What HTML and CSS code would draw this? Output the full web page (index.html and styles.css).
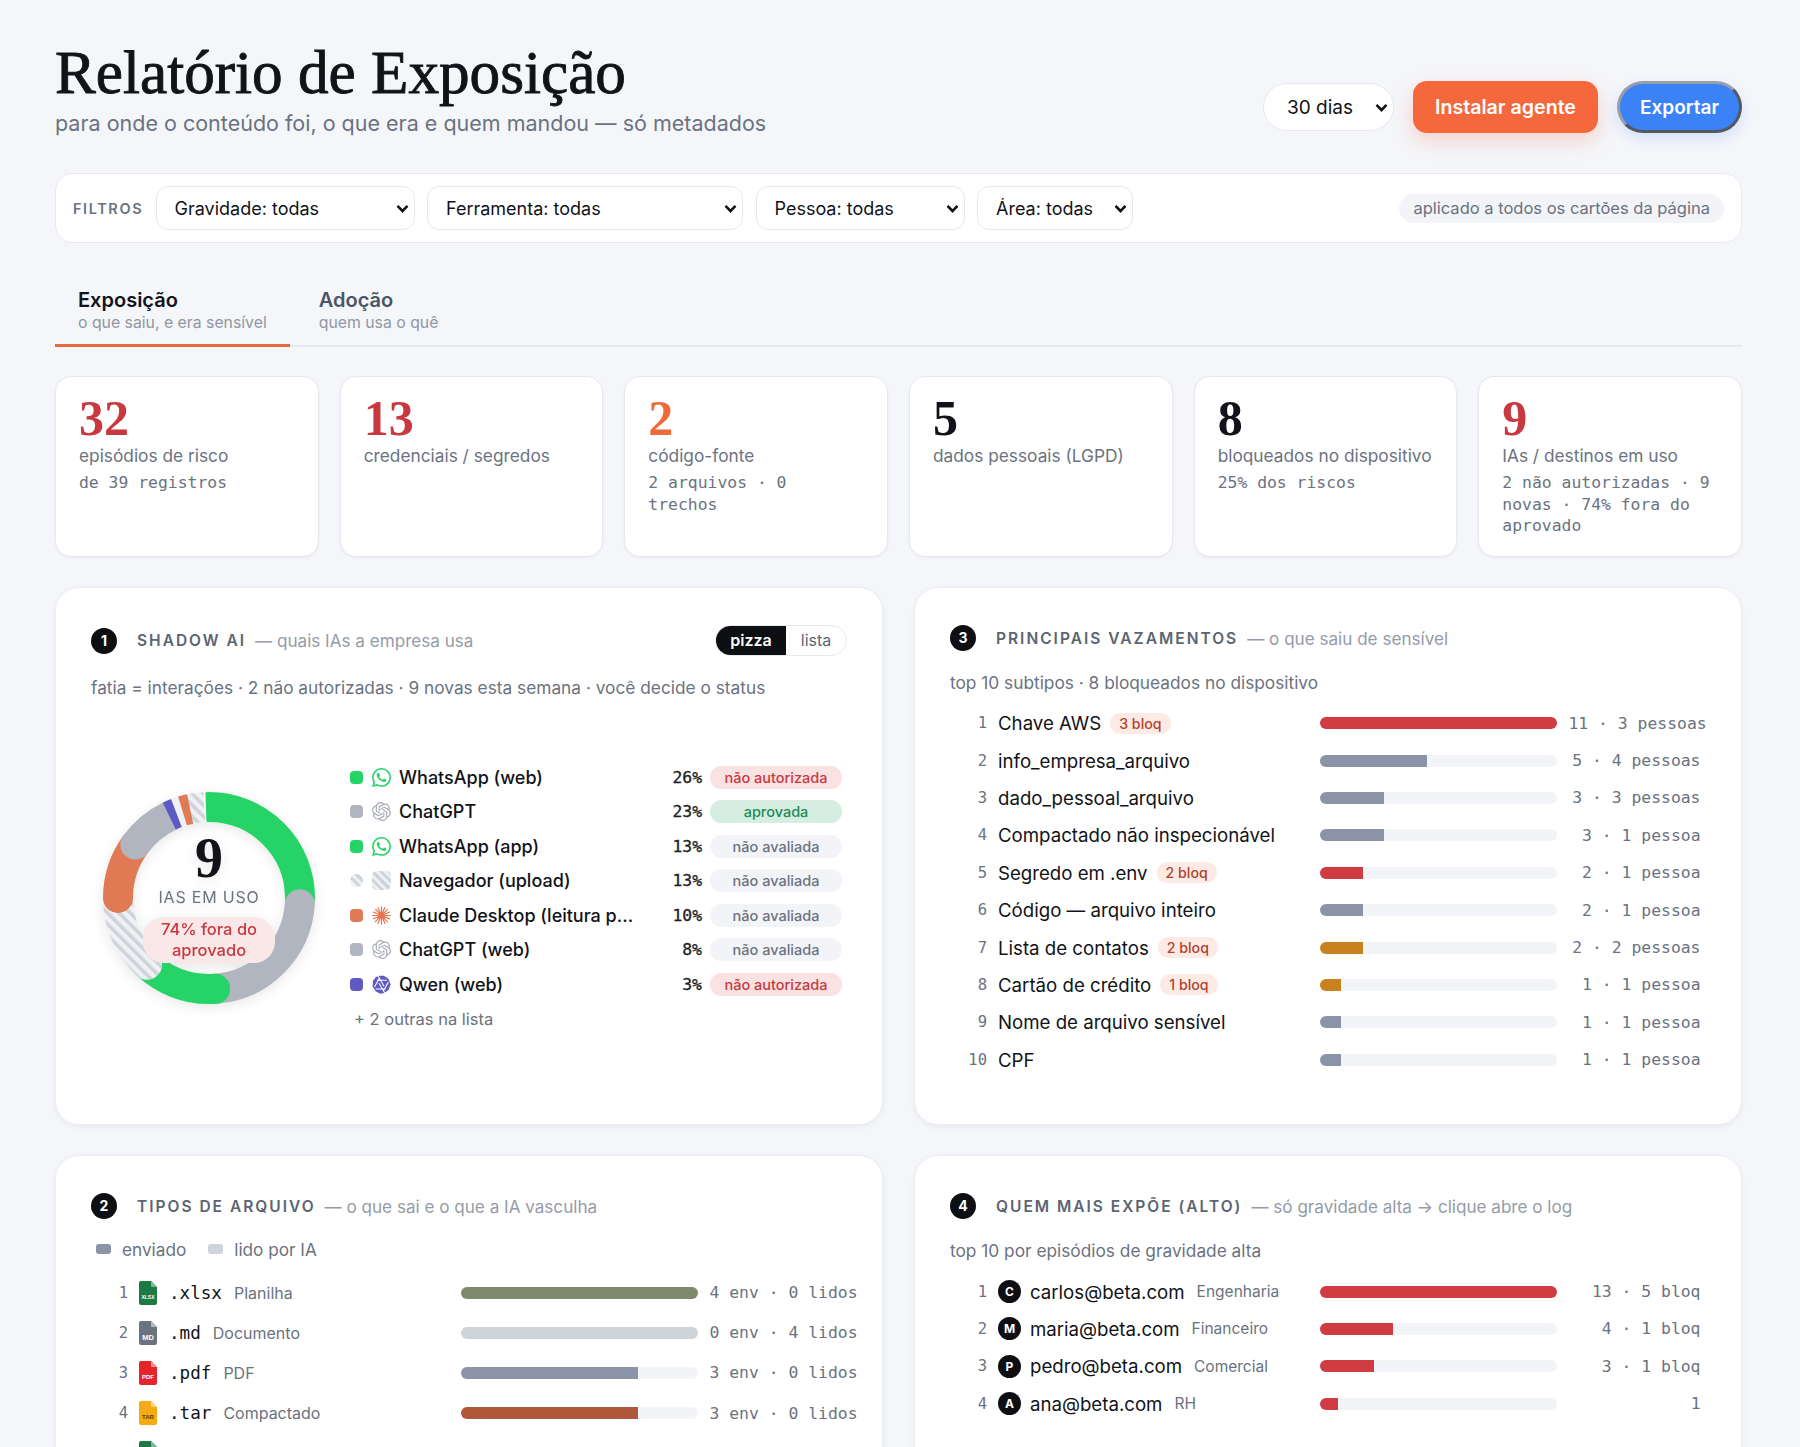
FILE: index.html
```html
<!DOCTYPE html>
<html lang="pt">
  <head>
    <meta charset="utf-8" />
    <title>Relatório de Exposição</title>
    <link rel="stylesheet" href="styles.css">
  </head>
  <body>
    <svg class="defs" width="0" height="0">
      <defs>
        <pattern id="stripes" width="8" height="8" patternUnits="userSpaceOnUse" patternTransform="rotate(45)">
          <rect width="8" height="8" fill="#f0f1f4" />
          <rect width="3.6" height="8" fill="#cfd3da" />
        </pattern>
        <symbol id="i-whatsapp" viewBox="0 0 24 24">
          <path d="M17.472 14.382c-.297-.149-1.758-.867-2.03-.967-.273-.099-.471-.148-.67.15-.197.297-.767.966-.94 1.164-.173.199-.347.223-.644.075-.297-.15-1.255-.463-2.39-1.475-.883-.788-1.48-1.761-1.653-2.059-.173-.297-.018-.458.13-.606.134-.133.298-.347.446-.52.149-.174.198-.298.298-.497.099-.198.05-.371-.025-.52-.075-.149-.669-1.612-.916-2.207-.242-.579-.487-.5-.669-.51-.173-.008-.371-.01-.57-.01-.198 0-.52.074-.792.372-.272.297-1.04 1.016-1.04 2.479 0 1.462 1.065 2.875 1.213 3.074.149.198 2.096 3.2 5.077 4.487.709.306 1.262.489 1.694.625.712.227 1.36.195 1.871.118.571-.085 1.758-.719 2.006-1.413.248-.694.248-1.289.173-1.413-.074-.124-.272-.198-.57-.347m-5.421 7.403h-.004a9.87 9.87 0 01-5.031-1.378l-.361-.214-3.741.982.998-3.648-.235-.374a9.86 9.86 0 01-1.51-5.26c.001-5.45 4.436-9.884 9.888-9.884 2.64 0 5.122 1.03 6.988 2.898a9.825 9.825 0 012.893 6.994c-.003 5.45-4.437 9.884-9.885 9.884m8.413-18.297A11.815 11.815 0 0012.05 0C5.495 0 .16 5.335.157 11.892c0 2.096.547 4.142 1.588 5.945L.057 24l6.305-1.654a11.882 11.882 0 005.683 1.448h.005c6.554 0 11.89-5.335 11.893-11.893a11.821 11.821 0 00-3.48-8.413z" fill="#25d366" />
        </symbol>
        <symbol id="i-openai" viewBox="0 0 24 24">
          <path d="M22.2819 9.8211a5.9847 5.9847 0 0 0-.5157-4.9108 6.0462 6.0462 0 0 0-6.5098-2.9A6.0651 6.0651 0 0 0 4.9807 4.1818a5.9847 5.9847 0 0 0-3.9977 2.9 6.0462 6.0462 0 0 0 .7427 7.0966 5.98 5.98 0 0 0 .511 4.9107 6.051 6.051 0 0 0 6.5146 2.9001A5.9847 5.9847 0 0 0 13.2599 24a6.0557 6.0557 0 0 0 5.7718-4.2058 5.9894 5.9894 0 0 0 3.9977-2.9001 6.0557 6.0557 0 0 0-.7475-7.0729zm-9.022 12.6081a4.4755 4.4755 0 0 1-2.8764-1.0408l.1419-.0804 4.7783-2.7582a.7948.7948 0 0 0 .3927-.6813v-6.7369l2.02 1.1686a.071.071 0 0 1 .038.052v5.5826a4.504 4.504 0 0 1-4.4945 4.4944zm-9.6607-4.1254a4.4708 4.4708 0 0 1-.5346-3.0137l.142.0852 4.783 2.7582a.7712.7712 0 0 0 .7806 0l5.8428-3.3685v2.3324a.0804.0804 0 0 1-.0332.0615L9.74 19.9502a4.4992 4.4992 0 0 1-6.1408-1.6464zM2.3408 7.8956a4.485 4.485 0 0 1 2.3655-1.9728V11.6a.7664.7664 0 0 0 .3879.6765l5.8144 3.3543-2.0201 1.1685a.0757.0757 0 0 1-.071 0l-4.8303-2.7865A4.504 4.504 0 0 1 2.3408 7.872zm16.5963 3.8558L13.1038 8.364 15.1192 7.2a.0757.0757 0 0 1 .071 0l4.8303 2.7913a4.4944 4.4944 0 0 1-.6765 8.1042v-5.6772a.79.79 0 0 0-.407-.667zm2.0107-3.0231l-.142-.0852-4.7735-2.7818a.7759.7759 0 0 0-.7854 0L9.409 9.2297V6.8974a.0662.0662 0 0 1 .0284-.0615l4.8303-2.7866a4.4992 4.4992 0 0 1 6.6802 4.66zM8.3065 12.863l-2.02-1.1638a.0804.0804 0 0 1-.038-.0567V6.0742a4.4992 4.4992 0 0 1 7.3757-3.4537l-.142.0805L8.704 5.459a.7948.7948 0 0 0-.3927.6813zm1.0976-2.3654l2.602-1.4998 2.6069 1.4998v2.9994l-2.5974 1.4997-2.6067-1.4997Z" fill="#a9aeb8" />
        </symbol>
        <symbol id="i-claude" viewBox="0 0 24 24">
          <g stroke="#e8734f" stroke-width="1.5" stroke-linecap="round">
            <path d="M12 12V1M12 12v11M12 12H.8M12 12h11.2M12 12 4.6 4.2M12 12l7.6-7.8M12 12l-7.8 7.8M12 12l7.4 8M12 12 7.6 2.2M12 12l4.2-10M12 12 7.4 22.2M12 12l4.4 10M12 12 1.6 7.6M12 12l10.4-4.4M12 12 1.8 16.2M12 12l10.4 4.2" />
          </g>
          <circle cx="12" cy="12" r="3" fill="#e8734f" />
        </symbol>
        <symbol id="i-qwen" viewBox="0 0 24 24">
          <path d="M9.5.8l5.5.2 5.8 3.6 2.6 7.2-2.2 6.8-5.8 4-5 1-5.8-3.2L.8 14.4 1.2 7.4 5 2.6z" fill="#5f59c4" />
          <path d="M6.2 6.6h12.6M7.8 1.6l7.4 12.6M20.6 9l-6.4 11.4M17 17.6H4.6M16 22.4 8.6 10M3.2 15.2 9.4 3.8" stroke="#fff" stroke-width="1.3" fill="none" />
        </symbol>
      </defs>
    </svg>

    <div class="page">
      <header class="top">
        <div>
          <h1>Relatório de Exposição</h1>
          <p class="lead">para onde o conteúdo foi, o que era e quem mandou — só metadados</p>
        </div>
        <div class="actions">
          <select class="range"><option>30 dias</option></select>
          <button class="btn-install">Instalar agente</button>
          <button class="btn-export">Exportar</button>
        </div>
      </header>

      <div class="filters">
        <span class="filters-label">FILTROS</span>
        <select class="f-grav"><option>Gravidade: todas</option></select>
        <select class="f-tool"><option>Ferramenta: todas</option></select>
        <select class="f-person"><option>Pessoa: todas</option></select>
        <select class="f-area"><option>Área: todas</option></select>
        <span class="filters-note">aplicado a todos os cartões da página</span>
      </div>

      <nav class="tabs">
        <div class="tab active"><strong>Exposição</strong><span>o que saiu, e era sensível</span></div>
        <div class="tab"><strong>Adoção</strong><span>quem usa o quê</span></div>
      </nav>

      <section class="kpis">
        <div class="kpi"><div class="kpi-num red">32</div><div class="kpi-label">episódios de risco</div><div class="kpi-sub">de 39 registros</div></div>
        <div class="kpi"><div class="kpi-num red">13</div><div class="kpi-label">credenciais / segredos</div></div>
        <div class="kpi"><div class="kpi-num orange">2</div><div class="kpi-label">código-fonte</div><div class="kpi-sub">2 arquivos · 0 trechos</div></div>
        <div class="kpi"><div class="kpi-num">5</div><div class="kpi-label">dados pessoais (LGPD)</div></div>
        <div class="kpi"><div class="kpi-num">8</div><div class="kpi-label">bloqueados no dispositivo</div><div class="kpi-sub">25% dos riscos</div></div>
        <div class="kpi"><div class="kpi-num red">9</div><div class="kpi-label">IAs / destinos em uso</div><div class="kpi-sub">2 não autorizadas · 9 novas · 74% fora do aprovado</div></div>
      </section>

      <section class="grid">
        <article class="card">
          <div class="card-head">
            <span class="step">1</span>
            <span class="card-title">SHADOW AI</span>
            <span class="card-sub">— quais IAs a empresa usa</span>
            <div class="toggle"><span class="on">pizza</span><span>lista</span></div>
          </div>
          <p class="card-note">fatia = interações · 2 não autorizadas · 9 novas esta semana · você decide o status</p>
          <div class="shadow-body">
            <div class="donut">
              <svg width="232" height="232" viewBox="0 0 232 232">
                <g fill="none" stroke-width="30" transform="rotate(-90 116 116)">
                  <circle cx="116" cy="116" r="91" pathLength="360" stroke="#25d366" stroke-linecap="round" stroke-dasharray="90 270" stroke-dashoffset="0" />
                  <circle cx="116" cy="116" r="91" pathLength="360" stroke="#b1b5bf" stroke-linecap="round" stroke-dasharray="82 278" stroke-dashoffset="-94" />
                  <circle cx="116" cy="116" r="91" pathLength="360" stroke="#25d366" stroke-linecap="round" stroke-dasharray="47 313" stroke-dashoffset="-176" />
                  <circle cx="116" cy="116" r="91" pathLength="360" stroke="#fff" stroke-linecap="round" stroke-dasharray="47 313" stroke-dashoffset="-223" />
                  <circle cx="116" cy="116" r="91" pathLength="360" stroke="url(#stripes)" stroke-linecap="round" stroke-dasharray="47 313" stroke-dashoffset="-223" />
                  <circle cx="116" cy="116" r="91" pathLength="360" stroke="#e07a54" stroke-linecap="round" stroke-dasharray="36 324" stroke-dashoffset="-270" />
                  <circle cx="116" cy="116" r="91" pathLength="360" stroke="#b1b5bf" stroke-linecap="round" stroke-dasharray="28 332" stroke-dashoffset="-306" />
                  <circle cx="116" cy="116" r="91" pathLength="360" stroke="#fff" stroke-dasharray="24 336" stroke-dashoffset="-334" />
                  <circle cx="116" cy="116" r="91" pathLength="360" stroke="url(#stripes)" stroke-dasharray="11 349" stroke-dashoffset="-346" />
                  <circle cx="116" cy="116" r="91" pathLength="360" stroke="#f0f1f4" stroke-dasharray="6 354" stroke-dashoffset="-339" />
                  <circle cx="116" cy="116" r="91" pathLength="360" stroke="#5f59c4" stroke-dasharray="5 355" stroke-dashoffset="-334" />
                  <circle cx="116" cy="116" r="91" pathLength="360" stroke="#e07a54" stroke-dasharray="5 355" stroke-dashoffset="-343" />
                </g>
              </svg>
              <div class="donut-center">
                <div class="donut-num">9</div>
                <div class="donut-label">IAS EM USO</div>
                <div class="donut-pill">74% fora do<br />aprovado</div>
              </div>
            </div>
            <div class="legend">
              <div class="leg-row"><i class="dot green"></i><svg class="leg-icon"><use href="#i-whatsapp" /></svg><span class="leg-name">WhatsApp (web)</span><span class="leg-pct">26%</span><span class="pill bad">não autorizada</span></div>
              <div class="leg-row"><i class="dot gray"></i><svg class="leg-icon"><use href="#i-openai" /></svg><span class="leg-name">ChatGPT</span><span class="leg-pct">23%</span><span class="pill good">aprovada</span></div>
              <div class="leg-row"><i class="dot green"></i><svg class="leg-icon"><use href="#i-whatsapp" /></svg><span class="leg-name">WhatsApp (app)</span><span class="leg-pct">13%</span><span class="pill">não avaliada</span></div>
              <div class="leg-row"><i class="dot striped"></i><i class="leg-stripe"></i><span class="leg-name">Navegador (upload)</span><span class="leg-pct">13%</span><span class="pill">não avaliada</span></div>
              <div class="leg-row"><i class="dot coral"></i><svg class="leg-icon"><use href="#i-claude" /></svg><span class="leg-name">Claude Desktop (leitura p...</span><span class="leg-pct">10%</span><span class="pill">não avaliada</span></div>
              <div class="leg-row"><i class="dot gray"></i><svg class="leg-icon"><use href="#i-openai" /></svg><span class="leg-name">ChatGPT (web)</span><span class="leg-pct">8%</span><span class="pill">não avaliada</span></div>
              <div class="leg-row"><i class="dot purple"></i><svg class="leg-icon"><use href="#i-qwen" /></svg><span class="leg-name">Qwen (web)</span><span class="leg-pct">3%</span><span class="pill bad">não autorizada</span></div>
              <div class="leg-more">+ 2 outras na lista</div>
            </div>
          </div>
        </article>

        <article class="card">
          <div class="card-head">
            <span class="step">3</span>
            <span class="card-title">PRINCIPAIS VAZAMENTOS</span>
            <span class="card-sub">— o que saiu de sensível</span>
          </div>
          <p class="card-note">top 10 subtipos · 8 bloqueados no dispositivo</p>
          <div class="rows">
            <div class="row"><span class="rank">1</span><div class="who"><span class="name">Chave AWS</span><span class="bloq">3 bloq</span></div><div class="track"><div class="fill f-red" style="width:100%"></div></div><span class="metric">11 · 3 pessoas</span></div>
            <div class="row"><span class="rank">2</span><div class="who"><span class="name">info_empresa_arquivo</span></div><div class="track"><div class="fill f-slate" style="width:45.4%"></div></div><span class="metric">5 · 4 pessoas</span></div>
            <div class="row"><span class="rank">3</span><div class="who"><span class="name">dado_pessoal_arquivo</span></div><div class="track"><div class="fill f-slate" style="width:27.2%"></div></div><span class="metric">3 · 3 pessoas</span></div>
            <div class="row"><span class="rank">4</span><div class="who"><span class="name">Compactado não inspecionável</span></div><div class="track"><div class="fill f-slate" style="width:27.2%"></div></div><span class="metric">3 · 1 pessoa</span></div>
            <div class="row"><span class="rank">5</span><div class="who"><span class="name">Segredo em .env</span><span class="bloq">2 bloq</span></div><div class="track"><div class="fill f-red" style="width:18.2%"></div></div><span class="metric">2 · 1 pessoa</span></div>
            <div class="row"><span class="rank">6</span><div class="who"><span class="name">Código — arquivo inteiro</span></div><div class="track"><div class="fill f-slate" style="width:18.2%"></div></div><span class="metric">2 · 1 pessoa</span></div>
            <div class="row"><span class="rank">7</span><div class="who"><span class="name">Lista de contatos</span><span class="bloq">2 bloq</span></div><div class="track"><div class="fill f-amber" style="width:18.2%"></div></div><span class="metric">2 · 2 pessoas</span></div>
            <div class="row"><span class="rank">8</span><div class="who"><span class="name">Cartão de crédito</span><span class="bloq">1 bloq</span></div><div class="track"><div class="fill f-amber" style="width:9.1%"></div></div><span class="metric">1 · 1 pessoa</span></div>
            <div class="row"><span class="rank">9</span><div class="who"><span class="name">Nome de arquivo sensível</span></div><div class="track"><div class="fill f-slate" style="width:9.1%"></div></div><span class="metric">1 · 1 pessoa</span></div>
            <div class="row"><span class="rank">10</span><div class="who"><span class="name">CPF</span></div><div class="track"><div class="fill f-slate" style="width:9.1%"></div></div><span class="metric">1 · 1 pessoa</span></div>
          </div>
        </article>

        <article class="card">
          <div class="card-head">
            <span class="step">2</span>
            <span class="card-title">TIPOS DE ARQUIVO</span>
            <span class="card-sub">— o que sai e o que a IA vasculha</span>
          </div>
          <div class="key">
            <span><i class="sw sw-sent"></i>enviado</span>
            <span><i class="sw sw-read"></i>lido por IA</span>
          </div>
          <div class="rows">
            <div class="row row-file"><span class="rank">1</span><div class="who">
              <svg class="file" viewBox="0 0 18 24"><path d="M2 0h10l6 6v16a2 2 0 0 1-2 2H2a2 2 0 0 1-2-2V2a2 2 0 0 1 2-2z" fill="#1d7a45" /><path d="M12 0l6 6h-5a1 1 0 0 1-1-1z" fill="#7fb897" /><text x="9" y="17.5" class="file-tag tiny">XLSX</text></svg>
              <span class="ext">.xlsx</span><span class="cat">Planilha</span></div><div class="track"><div class="fill f-olive" style="width:100%"></div></div><span class="metric">4 env · 0 lidos</span></div>
            <div class="row row-file"><span class="rank">2</span><div class="who">
              <svg class="file" viewBox="0 0 18 24"><path d="M2 0h10l6 6v16a2 2 0 0 1-2 2H2a2 2 0 0 1-2-2V2a2 2 0 0 1 2-2z" fill="#6b7280" /><path d="M12 0l6 6h-5a1 1 0 0 1-1-1z" fill="#b5bac2" /><text x="9" y="18.5" class="file-tag">MD</text></svg>
              <span class="ext">.md</span><span class="cat">Documento</span></div><div class="track"><div class="fill f-pale" style="width:100%"></div></div><span class="metric">0 env · 4 lidos</span></div>
            <div class="row row-file"><span class="rank">3</span><div class="who">
              <svg class="file" viewBox="0 0 18 24"><path d="M2 0h10l6 6v16a2 2 0 0 1-2 2H2a2 2 0 0 1-2-2V2a2 2 0 0 1 2-2z" fill="#e5252a" /><path d="M12 0l6 6h-5a1 1 0 0 1-1-1z" fill="#f29295" /><text x="9" y="18" class="file-tag small">PDF</text></svg>
              <span class="ext">.pdf</span><span class="cat">PDF</span></div><div class="track"><div class="fill f-slate" style="width:75%"></div></div><span class="metric">3 env · 0 lidos</span></div>
            <div class="row row-file"><span class="rank">4</span><div class="who">
              <svg class="file" viewBox="0 0 18 24"><path d="M2 0h10l6 6v16a2 2 0 0 1-2 2H2a2 2 0 0 1-2-2V2a2 2 0 0 1 2-2z" fill="#f4ab14" /><path d="M12 0l6 6h-5a1 1 0 0 1-1-1z" fill="#fad589" /><text x="9" y="18" class="file-tag small dark">TAR</text></svg>
              <span class="ext">.tar</span><span class="cat">Compactado</span></div><div class="track"><div class="fill f-rust" style="width:75%"></div></div><span class="metric">3 env · 0 lidos</span></div>
            <div class="row row-file"><span class="rank"></span><div class="who">
              <svg class="file" viewBox="0 0 18 24"><path d="M2 0h10l6 6v16a2 2 0 0 1-2 2H2a2 2 0 0 1-2-2V2a2 2 0 0 1 2-2z" fill="#1d7a45" /><path d="M12 0l6 6h-5a1 1 0 0 1-1-1z" fill="#7fb897" /></svg>
              </div></div>
          </div>
        </article>

        <article class="card">
          <div class="card-head">
            <span class="step">4</span>
            <span class="card-title">QUEM MAIS EXPÕE (ALTO)</span>
            <span class="card-sub">— só gravidade alta → clique abre o log</span>
          </div>
          <p class="card-note">top 10 por episódios de gravidade alta</p>
          <div class="rows">
            <div class="row"><span class="rank">1</span><div class="who"><span class="avatar">C</span><span class="name">carlos@beta.com</span><span class="dept">Engenharia</span></div><div class="track"><div class="fill f-red" style="width:100%"></div></div><span class="metric">13 · 5 bloq</span></div>
            <div class="row"><span class="rank">2</span><div class="who"><span class="avatar">M</span><span class="name">maria@beta.com</span><span class="dept">Financeiro</span></div><div class="track"><div class="fill f-red" style="width:31%"></div></div><span class="metric">4 · 1 bloq</span></div>
            <div class="row"><span class="rank">3</span><div class="who"><span class="avatar">P</span><span class="name">pedro@beta.com</span><span class="dept">Comercial</span></div><div class="track"><div class="fill f-red" style="width:23%"></div></div><span class="metric">3 · 1 bloq</span></div>
            <div class="row"><span class="rank">4</span><div class="who"><span class="avatar">A</span><span class="name">ana@beta.com</span><span class="dept">RH</span></div><div class="track"><div class="fill f-red" style="width:8%"></div></div><span class="metric">1</span></div>
          </div>
        </article>
      </section>
    </div>
  </body>
</html>
```

FILE: styles.css
```css
html,
body {
  margin: 0;
  padding: 0;
  height: 1447px;
  overflow: hidden;
}

body {
  font-family: Inter, "Noto Sans", sans-serif;
  background: #f5f6fa;
  color: #111318;
}

.defs {
  display: block;
  height: 0;
}

.page {
  padding: 36px 58px 0 55px;
}

.top {
  display: flex;
  justify-content: space-between;
  align-items: flex-start;
  height: 106px;
  margin-bottom: 31px;
}

h1 {
  margin: 0;
  font-family: "Liberation Serif", serif;
  font-size: 61.2px;
  line-height: 72px;
  font-weight: 400;
  -webkit-text-stroke: 0.9px #111318;
  color: #111318;
}

.lead {
  margin: 1px 0 0;
  font-size: 21.5px;
  line-height: 28px;
  color: #6b7280;
}

.actions {
  display: flex;
  align-items: center;
  gap: 19px;
  margin-top: 45px;
}

select {
  appearance: none;
  background: #fff url("data:image/svg+xml,%3Csvg xmlns='http://www.w3.org/2000/svg' width='13' height='9' viewBox='0 0 13 9'%3E%3Cpath d='M1.5 1.8 6.5 7l5-5.2' fill='none' stroke='%23111318' stroke-width='2.6'/%3E%3C/svg%3E") no-repeat right 5px center;
}

.actions select {
  width: 131px;
  height: 48px;
  border: 1px solid #e7e9ee;
  border-radius: 24px;
  padding-left: 23px;
  font-family: Inter, sans-serif;
  font-size: 19px;
  color: #111318;
}

.btn-install {
  height: 52px;
  width: 185px;
  border: none;
  border-radius: 14px;
  background: #f4683b;
  color: #fff;
  font-family: Inter, sans-serif;
  font-size: 19.6px;
  font-weight: 600;
  box-shadow: 0 8px 20px rgba(244, 104, 59, 0.25);
}

.btn-export {
  height: 52px;
  width: 125px;
  border-radius: 26px;
  border-style: solid;
  border-width: 3px;
  border-color: #9a9ea6 #55585f #55585f #9a9ea6;
  background: #3b82f6;
  color: #fff;
  font-family: Inter, sans-serif;
  font-size: 19px;
  font-weight: 600;
  box-shadow: 0 6px 14px rgba(59, 130, 246, 0.18);
}

.filters {
  display: flex;
  align-items: center;
  gap: 12.5px;
  height: 70px;
  box-sizing: border-box;
  padding: 0 17px;
  background: #fff;
  border: 1px solid #e7e9ee;
  border-radius: 18px;
}

.filters-label {
  width: 70px;
  font-size: 14.5px;
  font-weight: 600;
  letter-spacing: 1.6px;
  color: #6b7280;
}

.filters select {
  height: 44px;
  border: 1px solid #e7e9ee;
  border-radius: 12px;
  padding-left: 18px;
  font-family: Inter, sans-serif;
  font-size: 18px;
  color: #111318;
}

.f-grav {
  width: 259px;
}

.f-tool {
  width: 316px;
}

.f-person {
  width: 209px;
}

.f-area {
  width: 156px;
}

.filters-note {
  margin-left: auto;
  padding: 0 14px;
  line-height: 29px;
  border-radius: 15px;
  background: #f3f4f7;
  font-size: 16.5px;
  color: #6b7280;
}

.tabs {
  display: flex;
  gap: 6px;
  height: 104px;
  box-sizing: border-box;
  padding-top: 41px;
  border-bottom: 2px solid #e7e9ee;
  margin-bottom: 29px;
}

.tab {
  padding: 3px 23px 0;
  height: 63px;
  box-sizing: border-box;
}

.tab strong {
  display: block;
  font-size: 20px;
  line-height: 26px;
  font-weight: 600;
  color: #4b5563;
}

.tab span {
  display: block;
  font-size: 15.8px;
  line-height: 20px;
  color: #9096a2;
}

.tab.active {
  border-bottom: 3px solid #e8693f;
}

.tab.active strong {
  color: #111318;
}

.kpis {
  display: grid;
  grid-template-columns: repeat(6, 1fr);
  gap: 21px;
  margin-bottom: 30px;
}

.kpi {
  height: 181px;
  box-sizing: border-box;
  padding: 17px 23px 0;
  background: #fff;
  border: 1px solid #e7e9ee;
  border-radius: 16px;
  box-shadow: 0 1px 3px rgba(17, 19, 24, 0.05);
}

.kpi-num {
  font-family: "Liberation Serif", serif;
  font-size: 50px;
  line-height: 48px;
  font-weight: 700;
}

.red {
  color: #c9383f;
}

.orange {
  color: #f0693a;
}

.kpi-label {
  margin-top: 2px;
  font-size: 17.3px;
  line-height: 24px;
  white-space: nowrap;
  color: #6b7280;
}

.kpi-sub {
  margin-top: 4px;
  font-family: "DejaVu Sans Mono", monospace;
  font-size: 16.4px;
  line-height: 21.6px;
  color: #6b7280;
}

.grid {
  display: grid;
  grid-template-columns: 828px 828px;
  justify-content: space-between;
  gap: 30px 0;
}

.card {
  box-sizing: border-box;
  padding: 37px 35px 46px;
  background: #fff;
  border: 1px solid #eceef2;
  border-radius: 24px;
  box-shadow: 0 2px 6px rgba(17, 19, 24, 0.05);
}

.card-head {
  display: flex;
  align-items: center;
}

.step {
  width: 26px;
  height: 26px;
  margin-right: 20px;
  border-radius: 50%;
  background: #0d0f13;
  color: #fff;
  font-size: 14px;
  font-weight: 700;
  line-height: 26px;
  text-align: center;
}

.card-title {
  font-size: 15.5px;
  font-weight: 600;
  letter-spacing: 2px;
  color: #5b6472;
}

.card-sub {
  margin-left: 9px;
  font-size: 17.1px;
  color: #959ba7;
}

.toggle {
  display: flex;
  margin-left: auto;
  height: 31px;
  box-sizing: border-box;
  border: 1px solid #e7e9ee;
  border-radius: 16px;
  overflow: hidden;
  font-size: 16px;
  line-height: 29px;
  color: #5b6472;
}

.toggle span {
  width: 60px;
  text-align: center;
}

.toggle .on {
  width: 70px;
  background: #0d0f13;
  color: #fff;
  font-weight: 600;
}

.card-note {
  margin: 19.5px 0 0;
  font-size: 17.3px;
  line-height: 24px;
  color: #6b7280;
}

.shadow-body {
  display: flex;
  align-items: center;
  margin-top: 60.5px;
}

.donut {
  position: relative;
  width: 232px;
  height: 232px;
  margin: 0 25px 0 2px;
  filter: drop-shadow(0 3px 6px rgba(17, 19, 24, 0.1));
}

.donut-center {
  position: absolute;
  top: 50px;
  left: 26px;
  width: 180px;
  display: flex;
  flex-direction: column;
  align-items: center;
}

.donut-num {
  font-family: "Liberation Serif", serif;
  font-size: 56px;
  line-height: 52px;
  font-weight: 700;
  color: #111318;
}

.donut-label {
  margin-top: 3px;
  font-size: 16px;
  line-height: 20px;
  letter-spacing: 0.8px;
  color: #6b7280;
}

.donut-pill {
  margin-top: 10px;
  width: 132px;
  padding: 2px 0;
  box-sizing: border-box;
  border-radius: 21px;
  background: #fae7e8;
  font-size: 16.5px;
  font-weight: 500;
  line-height: 21px;
  text-align: center;
  color: #c9383f;
}

.legend {
  flex: none;
  width: 492px;
}

.leg-row {
  display: flex;
  align-items: center;
  height: 34.5px;
}

.dot {
  flex: none;
  width: 13px;
  height: 13px;
  margin-right: 9px;
  border-radius: 4px;
}

.green {
  background: #25d366;
}

.gray {
  background: #b1b5bf;
}

.coral {
  background: #e07a54;
}

.purple {
  background: #5f59c4;
}

.striped {
  border-radius: 50%;
  background: repeating-linear-gradient(45deg, #cfd3da 0 3px, #eef0f3 3px 6px);
}

.leg-icon {
  flex: none;
  width: 19px;
  height: 19px;
  margin-right: 8px;
}

.leg-stripe {
  flex: none;
  width: 19px;
  height: 19px;
  margin-right: 8px;
  border-radius: 5px;
  background: repeating-linear-gradient(45deg, #cfd3da 0 3px, #eef0f3 3px 6px);
}

.leg-name {
  flex: 1;
  font-size: 18px;
  font-weight: 450;
  white-space: nowrap;
}

.leg-pct {
  margin-right: 8px;
  font-family: "DejaVu Sans Mono", monospace;
  font-size: 16.4px;
  -webkit-text-stroke: 0.3px #1b1e24;
  color: #1b1e24;
}

.pill {
  flex: none;
  width: 132px;
  height: 23px;
  border-radius: 12px;
  background: #f3f4f7;
  font-size: 14.5px;
  font-weight: 500;
  line-height: 24px;
  text-align: center;
  color: #6b7280;
}

.pill.bad {
  background: #fae1e2;
  color: #c9383f;
}

.pill.good {
  background: #d5eee1;
  color: #1d8a54;
}

.leg-more {
  height: 34.5px;
  padding-left: 4px;
  line-height: 34.5px;
  font-size: 16.5px;
  color: #6b7280;
}

.key {
  display: flex;
  gap: 22px;
  margin: 19px 0 0 5px;
  font-size: 17.2px;
  line-height: 24px;
  color: #6b7280;
}

.sw {
  display: inline-block;
  width: 15px;
  height: 10px;
  margin-right: 11px;
  border-radius: 3px;
  vertical-align: 2px;
}

.sw-sent {
  background: #8a94a6;
}

.sw-read {
  background: #cfd3da;
}

.rows {
  margin-top: 10px;
}

.row {
  display: flex;
  align-items: center;
  height: 37.4px;
  white-space: nowrap;
}

.row-file {
  height: 40.2px;
}

.rank {
  flex: none;
  width: 37px;
  margin-right: 11px;
  font-family: "DejaVu Sans Mono", monospace;
  font-size: 15.5px;
  color: #6b7280;
  text-align: right;
}

.who {
  flex: none;
  display: flex;
  align-items: center;
  width: 321.5px;
}

.name {
  font-size: 18.65px;
}

.bloq {
  margin-left: 9px;
  padding: 0 9px;
  border-radius: 10px;
  background: #fdeae5;
  font-size: 14.2px;
  font-weight: 500;
  line-height: 21px;
  color: #b0432b;
}

.track {
  flex: none;
  width: 237px;
  height: 12px;
  border-radius: 6px;
  background: #f3f4f7;
  overflow: hidden;
}

.fill {
  height: 100%;
}

.f-red {
  background: #d13c43;
}

.f-slate {
  background: #8a94a6;
}

.f-amber {
  background: #c9801e;
}

.f-olive {
  background: #7d8b6c;
}

.f-pale {
  background: #cfd3da;
}

.f-rust {
  background: #b0563b;
}

.metric {
  flex: none;
  width: 132px;
  margin-left: 12px;
  font-family: "DejaVu Sans Mono", monospace;
  font-size: 16.4px;
  color: #6b7280;
  text-align: right;
}

.file {
  flex: none;
  width: 18px;
  height: 24px;
  margin-right: 12px;
}

.file-tag {
  font-family: "Liberation Sans", sans-serif;
  font-size: 7.5px;
  font-weight: 700;
  fill: #fff;
  text-anchor: middle;
}

.file-tag.small {
  font-size: 6px;
}

.file-tag.tiny {
  font-size: 5px;
}

.file-tag.dark {
  fill: #5b3d05;
}

.ext {
  font-family: "DejaVu Sans Mono", monospace;
  font-size: 17.6px;
  color: #111318;
}

.cat {
  margin-left: 12px;
  font-size: 16px;
  color: #6b7280;
}

.avatar {
  flex: none;
  width: 23px;
  height: 23px;
  margin-right: 9px;
  border-radius: 50%;
  background: #0d0f13;
  color: #fff;
  font-size: 12px;
  font-weight: 700;
  line-height: 23px;
  text-align: center;
}

.dept {
  margin-left: 12px;
  font-size: 15.5px;
  color: #6b7280;
}
```
